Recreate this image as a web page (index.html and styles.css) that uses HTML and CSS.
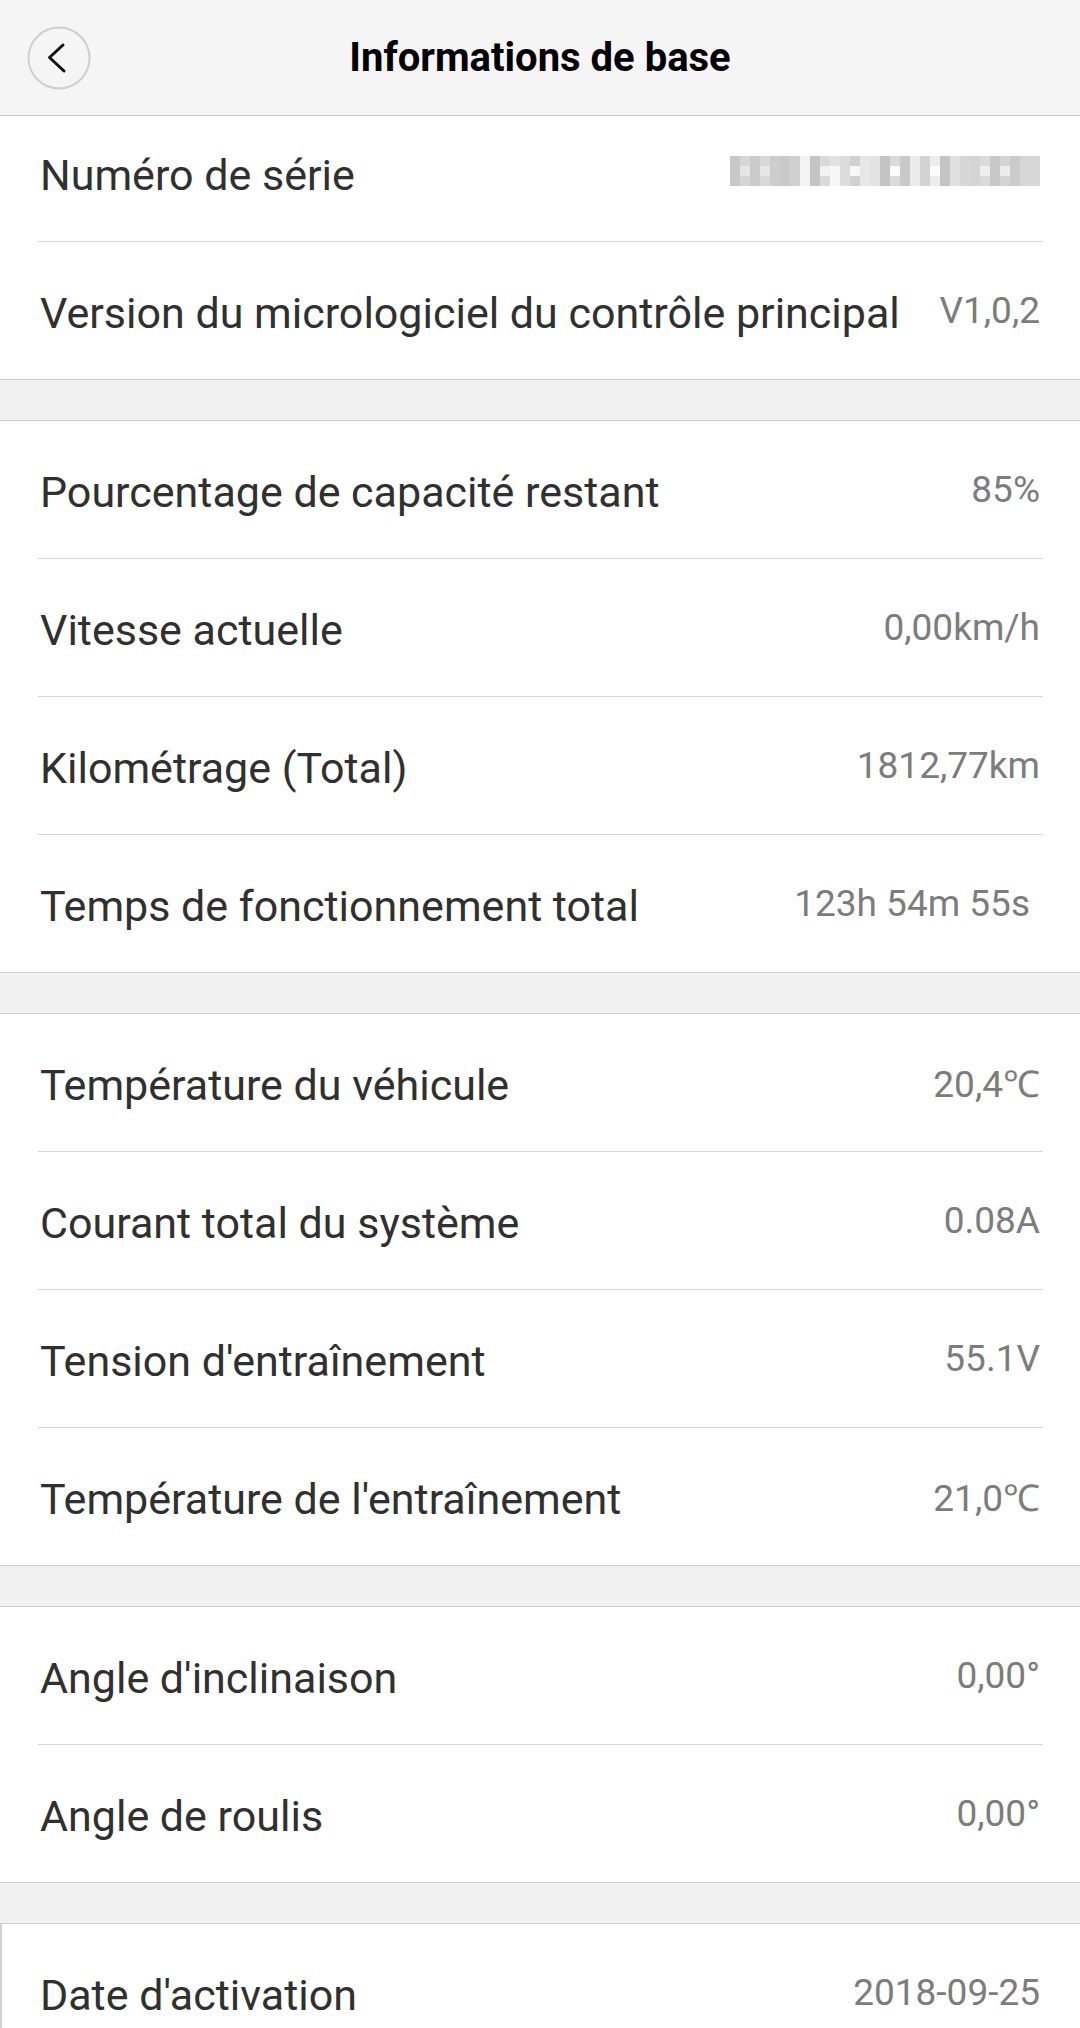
FILE: index.html
```html
<!DOCTYPE html>
<html lang="fr">
<head>
<meta charset="UTF-8">
<meta name="viewport" content="width=device-width, initial-scale=1.0">
<title>Informations de base</title>
<link rel="stylesheet" href="styles.css">
</head>
<body>

    <header class="topbar">
        <div class="back">
            <svg width="64" height="64" viewBox="0 0 64 64">
                <circle cx="32" cy="32" r="30.5" fill="none" stroke="#cfcfcf" stroke-width="2"/>
                <polyline points="36,19 22.5,31.5 37,45" fill="none" stroke="#111" stroke-width="3" stroke-linecap="round" stroke-linejoin="round"/>
            </svg>
        </div>
        <h1 class="title">Informations de base</h1>
        <div></div>
    </header>

    <div class="list">

        <div class="section">
            <div class="row">
                <span class="label">Numéro de série</span>
                <span class="value">
                    <!-- serial number is blurred in the app screenshot -->
                    <svg class="blur" width="310" height="30" viewBox="0 0 31 3" shape-rendering="crispEdges">
                        <rect x="0" y="0" width="1" height="3" fill="#c8c8c8"/>
                        <rect x="1" y="0" width="1" height="3" fill="#d6d6d6"/>
                        <rect x="2" y="0" width="1" height="3" fill="#cbcbcb"/>
                        <rect x="3" y="0" width="1" height="3" fill="#d8d8d8"/>
                        <rect x="4" y="0" width="1" height="3" fill="#cdcdcd"/>
                        <rect x="5" y="0" width="1" height="3" fill="#c9c9c9"/>
                        <rect x="6" y="0" width="1" height="3" fill="#d0d0d0"/>
                        <rect x="7" y="0" width="1" height="3" fill="#f3f3f3"/>
                        <rect x="8" y="0" width="1" height="3" fill="#c5c5c5"/>
                        <rect x="9" y="0" width="1" height="3" fill="#dadada"/>
                        <rect x="10" y="0" width="1" height="3" fill="#e2e2e2"/>
                        <rect x="11" y="0" width="1" height="3" fill="#dcdcdc"/>
                        <rect x="12" y="0" width="1" height="3" fill="#d1d1d1"/>
                        <rect x="13" y="0" width="1" height="3" fill="#e7e7e7"/>
                        <rect x="14" y="0" width="1" height="3" fill="#e3e3e3"/>
                        <rect x="15" y="0" width="1" height="3" fill="#c4c4c4"/>
                        <rect x="16" y="0" width="1" height="3" fill="#dadada"/>
                        <rect x="17" y="0" width="1" height="3" fill="#c9c9c9"/>
                        <rect x="18" y="0" width="1" height="3" fill="#eaeaea"/>
                        <rect x="19" y="0" width="1" height="3" fill="#d3d3d3"/>
                        <rect x="20" y="0" width="1" height="3" fill="#ededed"/>
                        <rect x="21" y="0" width="1" height="3" fill="#c4c4c4"/>
                        <rect x="22" y="0" width="1" height="3" fill="#e0e0e0"/>
                        <rect x="23" y="0" width="1" height="3" fill="#d6d6d6"/>
                        <rect x="24" y="0" width="1" height="3" fill="#d4d4d4"/>
                        <rect x="25" y="0" width="1" height="3" fill="#dadada"/>
                        <rect x="26" y="0" width="1" height="3" fill="#c8c8c8"/>
                        <rect x="27" y="0" width="1" height="3" fill="#d4d4d4"/>
                        <rect x="28" y="0" width="1" height="3" fill="#cbcbcb"/>
                        <rect x="29" y="0" width="1" height="3" fill="#d6d6d6"/>
                        <rect x="30" y="0" width="1" height="3" fill="#d7d7d7"/>
                        <rect x="1" y="1" width="1" height="1" fill="#e6e6e6"/>
                        <rect x="3" y="1" width="1" height="1" fill="#e6e6e6"/>
                        <rect x="9" y="1" width="1" height="1" fill="#f2f2f2"/>
                        <rect x="10" y="1" width="1" height="2" fill="#f7f7f7"/>
                        <rect x="12" y="1" width="1" height="1" fill="#f6f6f6"/>
                        <rect x="16" y="1" width="1" height="1" fill="#fafafa"/>
                        <rect x="20" y="1" width="1" height="1" fill="#fcfcfc"/>
                        <rect x="25" y="1" width="1" height="1" fill="#eeeeee"/>
                        <rect x="27" y="1" width="1" height="1" fill="#ececec"/>
                    </svg>
                </span>
            </div>
            <div class="row">
                <span class="label">Version du micrologiciel du contrôle principal</span>
                <span class="value">V1,0,2</span>
            </div>
        </div>

        <div class="section">
            <div class="row">
                <span class="label">Pourcentage de capacité restant</span>
                <span class="value">85%</span>
            </div>
            <div class="row">
                <span class="label">Vitesse actuelle</span>
                <span class="value">0,00km/h</span>
            </div>
            <div class="row">
                <span class="label">Kilométrage (Total)</span>
                <span class="value">1812,77km</span>
            </div>
            <div class="row">
                <span class="label">Temps de fonctionnement total</span>
                <span class="value time">123h 54m 55s</span>
            </div>
        </div>

        <div class="section">
            <div class="row">
                <span class="label">Température du véhicule</span>
                <span class="value">20,4℃</span>
            </div>
            <div class="row">
                <span class="label">Courant total du système</span>
                <span class="value">0.08A</span>
            </div>
            <div class="row">
                <span class="label">Tension d'entraînement</span>
                <span class="value">55.1V</span>
            </div>
            <div class="row">
                <span class="label">Température de l'entraînement</span>
                <span class="value">21,0℃</span>
            </div>
        </div>

        <div class="section">
            <div class="row">
                <span class="label">Angle d'inclinaison</span>
                <span class="value">0,00°</span>
            </div>
            <div class="row">
                <span class="label">Angle de roulis</span>
                <span class="value">0,00°</span>
            </div>
        </div>

        <div class="section boxed">
            <div class="row">
                <span class="label">Date d'activation</span>
                <span class="value">2018-09-25</span>
            </div>
        </div>

    </div>

</body>
</html>
```

FILE: styles.css
```css
body {
    margin: 0;
    padding: 0;
    background-color: #f1f1f1;
    font-family: Roboto, "Liberation Sans", Arial, sans-serif;
    overflow: hidden;
}

.topbar {
    position: relative;
    z-index: 2; /* list slides a bit under the bar */
    height: 115px;
    background-color: #f5f5f5;
    border-bottom: 1px solid #c9c9c9;
    display: grid;
    grid-template-columns: 1fr auto 1fr;
    align-items: center;
}

.back {
    margin-left: 27px;
    width: 64px;
    height: 64px;
}

.back svg {
    display: block;
}

.title {
    margin: 0;
    font-size: 40px;
    font-weight: 700;
    color: #000;
}

.list {
    margin-top: -13px;
}

.section {
    background-color: #fff;
    border-top: 1px solid #cdcdcd;
    border-bottom: 1px solid #cdcdcd;
    margin-bottom: 40px;
}

.section.boxed {
    border-left: 2px solid #d2d2d2;
}

.row {
    height: 132px;
    margin: 0 37px 0 38px;
    padding: 5px 3px 0 2px;
    display: flex;
    justify-content: space-between;
    align-items: center;
    border-bottom: 1px solid #d5d5d5;
}

.section.boxed .row {
    margin-left: 36px;
}

.row:last-child {
    border-bottom: none;
}

.label {
    font-size: 43px;
    color: #303030;
    white-space: nowrap;
}

.value {
    font-size: 37px;
    color: #7c7c7c;
    white-space: nowrap;
    margin-bottom: 6px;
}

.value.time {
    margin-right: 10px;
}

.blur {
    display: block;
    margin-top: -2px;
}
```
